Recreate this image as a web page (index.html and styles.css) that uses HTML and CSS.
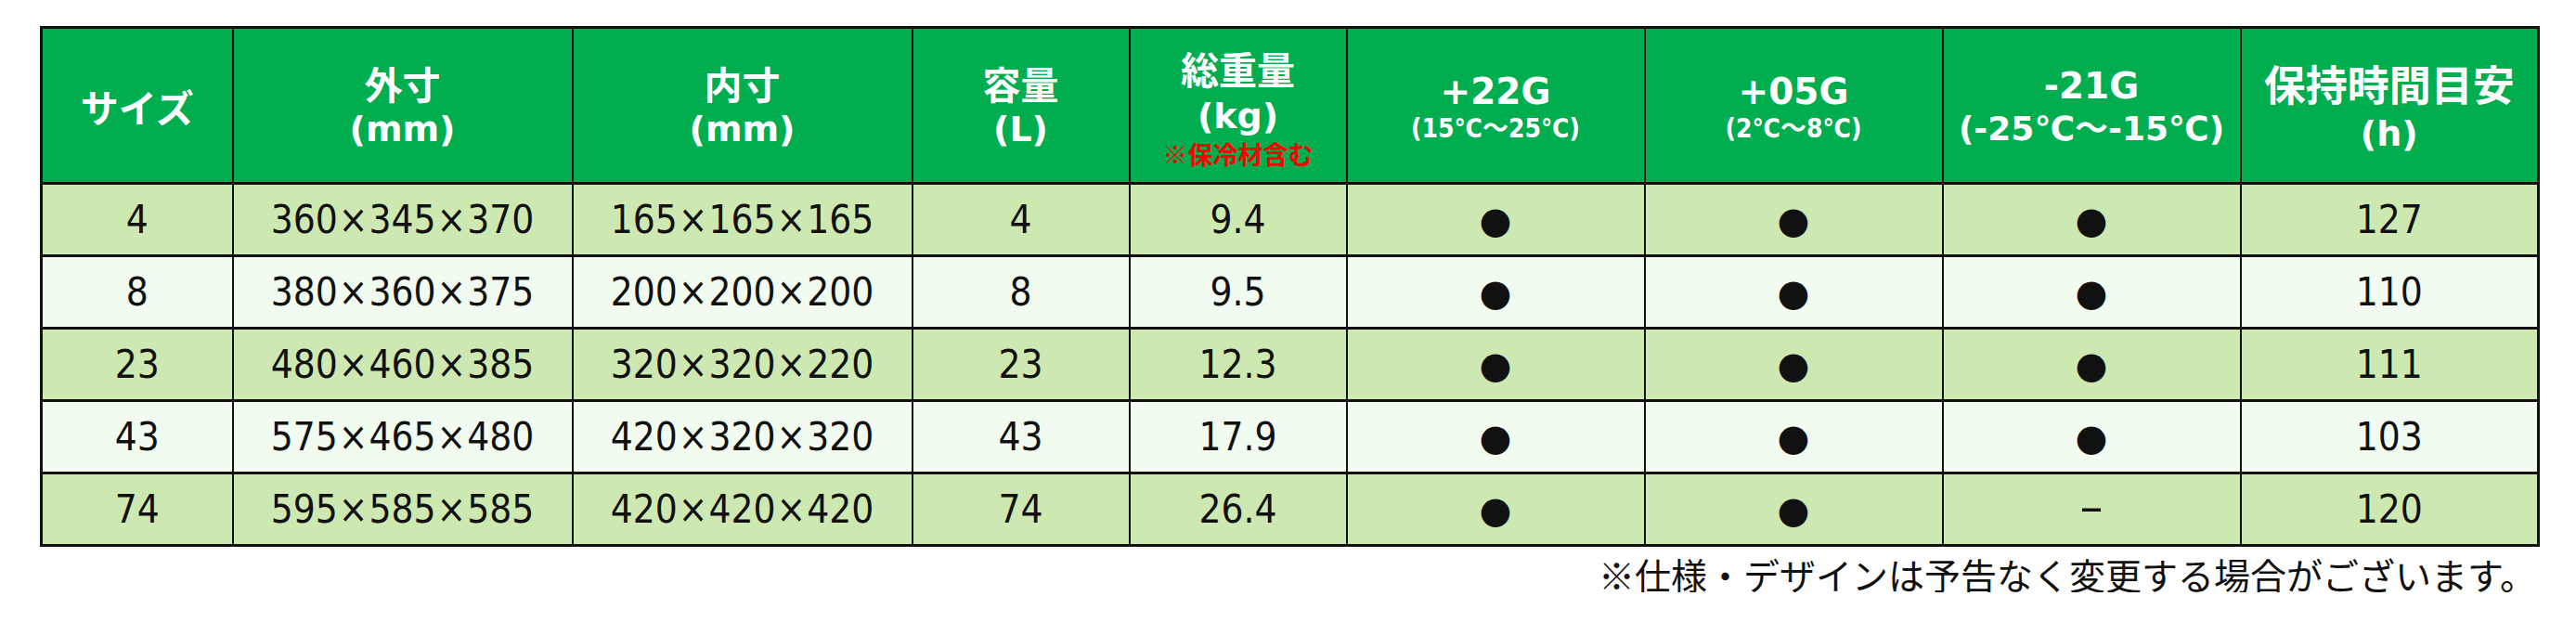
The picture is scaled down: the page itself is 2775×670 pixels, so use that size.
FILE: index.html
```html
<!DOCTYPE html>
<html lang="ja">
<head>
<meta charset="utf-8">
<title>サイズ表</title>
<link rel="stylesheet" href="styles.css">
</head>
<body>
<div class="page">
  <table class="spec">
    <colgroup>
      <col class="c-size">
      <col class="c-dim">
      <col class="c-dim">
      <col class="c-num">
      <col class="c-num">
      <col class="c-temp">
      <col class="c-temp">
      <col class="c-temp">
      <col class="c-temp">
    </colgroup>
    <thead>
      <tr>
        <th><span class="jp">サイズ</span></th>
        <th><span class="jp two">外寸</span><span class="unit two">(mm)</span></th>
        <th><span class="jp two">内寸</span><span class="unit two">(mm)</span></th>
        <th><span class="jp two">容量</span><span class="unit two">(L)</span></th>
        <th><span class="jp three">総重量</span><span class="unit three">(kg)</span><span class="note">※保冷材含む</span></th>
        <th class="shift"><span class="grade">+22G</span><span class="range small">(15℃～25℃)</span></th>
        <th class="shift"><span class="grade">+05G</span><span class="range small">(2℃～8℃)</span></th>
        <th class="shift"><span class="grade">-21G</span><span class="range big">(-25℃～-15℃)</span></th>
        <th class="shift"><span class="jp wide">保持時間目安</span><span class="unit tall">(h)</span></th>
      </tr>
    </thead>
    <tbody>
      <tr>
        <td>4</td>
        <td>360<span class="x">×</span>345<span class="x">×</span>370</td>
        <td>165<span class="x">×</span>165<span class="x">×</span>165</td>
        <td>4</td>
        <td>9.4</td>
        <td><span class="dot">●</span></td>
        <td><span class="dot">●</span></td>
        <td><span class="dot">●</span></td>
        <td>127</td>
      </tr>
      <tr>
        <td>8</td>
        <td>380<span class="x">×</span>360<span class="x">×</span>375</td>
        <td>200<span class="x">×</span>200<span class="x">×</span>200</td>
        <td>8</td>
        <td>9.5</td>
        <td><span class="dot">●</span></td>
        <td><span class="dot">●</span></td>
        <td><span class="dot">●</span></td>
        <td>110</td>
      </tr>
      <tr>
        <td>23</td>
        <td>480<span class="x">×</span>460<span class="x">×</span>385</td>
        <td>320<span class="x">×</span>320<span class="x">×</span>220</td>
        <td>23</td>
        <td>12.3</td>
        <td><span class="dot">●</span></td>
        <td><span class="dot">●</span></td>
        <td><span class="dot">●</span></td>
        <td>111</td>
      </tr>
      <tr>
        <td>43</td>
        <td>575<span class="x">×</span>465<span class="x">×</span>480</td>
        <td>420<span class="x">×</span>320<span class="x">×</span>320</td>
        <td>43</td>
        <td>17.9</td>
        <td><span class="dot">●</span></td>
        <td><span class="dot">●</span></td>
        <td><span class="dot">●</span></td>
        <td>103</td>
      </tr>
      <tr>
        <td>74</td>
        <td>595<span class="x">×</span>585<span class="x">×</span>585</td>
        <td>420<span class="x">×</span>420<span class="x">×</span>420</td>
        <td>74</td>
        <td>26.4</td>
        <td><span class="dot">●</span></td>
        <td><span class="dot">●</span></td>
        <td><span class="dash">–</span></td>
        <td>120</td>
      </tr>
    </tbody>
  </table>
  <p class="footnote">※仕様・デザインは予告なく変更する場合がございます。</p>
</div>
</body>
</html>
```

FILE: styles.css
```css
html, body {
  margin: 0;
  background: #ffffff;
}

.page {
  width: 2689px;
  padding: 28px 0 0 43px;
}

.spec {
  width: 2689px;
  table-layout: fixed;
  border-collapse: collapse;
  border: 3px solid #111111;
}

.c-size { width: 206px; }
.c-dim  { width: 366px; }
.c-num  { width: 234px; }
.c-temp { width: 321px; }

.spec th,
.spec td {
  padding: 0;
  text-align: center;
  vertical-align: middle;
  border-left: 2px solid #111111;
  border-right: 2px solid #111111;
  border-top: 3px solid #111111;
  border-bottom: 3px solid #111111;
}

/* ---------- header ---------- */
.spec thead tr {
  height: 168px;
}

.spec thead th {
  background: #00ad4f;
  color: #ffffff;
  font-family: "DejaVu Sans", "Noto Sans CJK JP", sans-serif;
  font-weight: bold;
}

.spec thead th span {
  display: block;
}

.spec thead th.shift {
  padding-top: 7px;
}

.jp {
  font-family: "Noto Sans CJK JP", sans-serif;
  font-size: 41px;
  line-height: 50px;
}

.jp.wide {
  font-size: 45px;
  line-height: 55px;
}

.unit {
  font-size: 38px;
  line-height: 50px;
}

.unit.tall {
  line-height: 55px;
}

.jp.three,
.unit.three {
  line-height: 52px;
}

.note {
  font-family: "Noto Sans CJK JP", sans-serif;
  font-size: 27px;
  line-height: 30px;
  color: #ff0000;
}

.grade {
  font-size: 39px;
  line-height: 44px;
}

.range {
  font-family: "DejaVu Sans Condensed", "DejaVu Sans", "Noto Sans CJK JP", sans-serif;
  font-stretch: condensed;
}

.range.small {
  font-size: 28px;
  line-height: 36px;
}

.range.big {
  font-family: "DejaVu Sans", "Noto Sans CJK JP", sans-serif;
  font-stretch: normal;
  font-size: 36px;
  line-height: 48px;
}

/* ---------- body ---------- */
.spec tbody tr {
  height: 78px;
}

.spec tbody tr:nth-child(odd) td {
  background: #cde8b0;
}

.spec tbody tr:nth-child(even) td {
  background: #f1fbf0;
}

.spec td {
  font-family: "DejaVu Sans Condensed", "DejaVu Sans", sans-serif;
  font-stretch: condensed;
  font-size: 42px;
  color: #111111;
  white-space: nowrap;
}

.x {
  margin: 0 1px;
}

.dot {
  font-family: "DejaVu Sans", sans-serif;
  font-stretch: normal;
  font-size: 40px;
}

.dash {
  font-family: "DejaVu Sans", sans-serif;
  font-stretch: normal;
  font-size: 50px;
  line-height: 42px;
}

/* ---------- footnote ---------- */
.footnote {
  margin: 10px 0 0;
  padding-right: 0;
  text-align: right;
  font-family: "Noto Sans CJK JP", sans-serif;
  font-size: 39px;
  line-height: 39px;
  color: #111111;
}
```
